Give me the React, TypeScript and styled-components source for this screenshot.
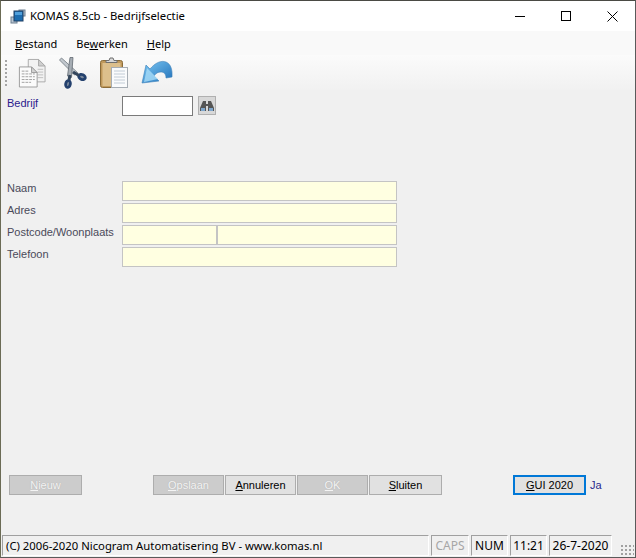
import styled, { createGlobalStyle } from 'styled-components';

const GlobalStyle = createGlobalStyle`
  html, body {
    margin: 0;
    padding: 0;
    background: #f0f0f0;
  }
`;

const Mnemonic = styled.span`
  text-decoration: underline;
  text-underline-offset: 1px;
`;

const AppIcon = () => (
  <svg width="16" height="16" viewBox="0 0 16 16">
    <rect x="9" y="2" width="6" height="6" fill="#b9c6d2" stroke="#6d7f90" />
    <rect x="1" y="9" width="6" height="6" fill="#b9c6d2" stroke="#6d7f90" />
    <rect x="4" y="3" width="9" height="10" fill="#1c6db0" stroke="#1f3f63" />
    <rect x="5" y="4" width="7" height="3" fill="#4fa0dc" />
  </svg>
);

const CopyIcon = () => (
  <svg width="28" height="32" viewBox="0 0 30 32">
    <path d="M11 1.5h11l7 7v17H11z" fill="#f2f2f2" stroke="#a8a8a8" />
    <path d="M22 1.5v7h7z" fill="#cfcfcf" stroke="#a8a8a8" />
    <path d="M21 12h6M21 15h6M21 18h6M21 21h6" stroke="#bcbcbc" />
    <path d="M1.5 9.5h13l6 6v15.5h-19z" fill="#fbfbfb" stroke="#9a9a9a" />
    <path d="M14.5 9.5v6h6z" fill="#d4d4d4" stroke="#9a9a9a" />
    <path d="M4 14h8M4 17h14M4 20h14M4 23h14M4 26h10" stroke="#9d9d9d" strokeDasharray="3 1" />
  </svg>
);

const CutIcon = () => (
  <svg width="28" height="32" viewBox="0 0 28 32">
    <path d="M0.5 3l15 15 3-2.5L2.5 1z" fill="#c2c8ce" stroke="#6f777f" strokeWidth="0.8" />
    <path d="M11 0.5L8.5 19l4 1.5 1.5-20z" fill="#a6adb4" stroke="#626a72" strokeWidth="0.8" />
    <ellipse cx="23" cy="20" rx="3.4" ry="2.4" fill="#7c8a9c" stroke="#24416e" strokeWidth="2.8" transform="rotate(25 23 20)" />
    <path d="M14 15l6 3.5" stroke="#34465c" strokeWidth="3" />
    <ellipse cx="9" cy="27" rx="2.3" ry="3.4" fill="#7c8a9c" stroke="#24416e" strokeWidth="2.8" transform="rotate(12 9 27)" />
    <path d="M11 18l-1 5" stroke="#34465c" strokeWidth="3" />
  </svg>
);

const PasteIcon = () => (
  <svg width="28" height="32" viewBox="0 0 28 32">
    <rect x="0.5" y="3.5" width="22" height="27" rx="2" fill="#c0995c" stroke="#8a6c3a" />
    <rect x="2.5" y="6" width="18" height="23" fill="#dcbf8c" />
    <path d="M6 5.5h11v-2h-3l-1-2.5h-3l-1 2.5H6z" fill="#d8d8d8" stroke="#6f6f6f" />
    <rect x="11.5" y="10.5" width="16" height="20" fill="#fafbfc" stroke="#a6adb4" />
    <path d="M14 14h11M14 17h11M14 20h11M14 23h11M14 26h11" stroke="#c2ccd6" />
  </svg>
);

const UndoIcon = () => (
  <svg width="32" height="30" viewBox="0 0 32 30">
    <defs>
      <linearGradient id="undoFill" x1="0" y1="0" x2="1" y2="1">
        <stop offset="0" stopColor="#7cc8f4" />
        <stop offset="1" stopColor="#1f6fb8" />
      </linearGradient>
    </defs>
    <path
      d="M1 25L5 7l4 4c5-6 11-9 16-7 5 2 6.500 8 6 15l-6 1c0-4-2-6-5-6-3 0-5 1-7 4l5 5z"
      fill="url(#undoFill)"
      stroke="#3a7fb8"
      strokeWidth="0.6"
    />
    <path d="M3 24L6 10l11 11z" fill="#a8dcf8" opacity="0.8" />
  </svg>
);

const BinocularsIcon = () => (
  <svg width="14" height="12" viewBox="0 0 14 12">
    <path d="M3 1h3v3h2V1h3l3 7v3H8V6H6v5H0V8z" fill="#555" />
    <rect x="1" y="8" width="4" height="3" fill="#7ea6cc" />
    <rect x="9" y="8" width="4" height="3" fill="#7ea6cc" />
  </svg>
);

const WindowIcon = () => (
  <svg width="10" height="10" viewBox="0 0 10 10">
    <rect x="0.5" y="0.5" width="9" height="9" fill="none" stroke="#000" />
  </svg>
);

const CloseIcon = () => (
  <svg width="11" height="11" viewBox="0 0 11 11">
    <path d="M0.5 0.5l10 10M10.5 0.5l-10 10" stroke="#000" />
  </svg>
);

const Frame = styled.div`
  box-sizing: border-box;
  width: 636px;
  height: 558px;
  display: flex;
  flex-direction: column;
  background: #f0f0f0;
  border-top: 1px solid #4a4a44;
  border-left: 1px solid #6b6b55;
  border-right: 1px solid #5a5a5a;
  border-bottom: 1px solid #5a5a5a;
  font-family: 'Liberation Sans', Arial, sans-serif;
  font-size: 11px;
  color: #000;
  overflow: hidden;
`;

const TitleBar = styled.div`
  box-sizing: border-box;
  height: 30px;
  flex: none;
  display: flex;
  align-items: center;
  background: #fff;
  padding-left: 9px;
`;

const TitleText = styled.span`
  margin: 0 0 2px 4px;
  font-family: 'Noto Sans', 'Open Sans', sans-serif;
  font-size: 11.3px;
  flex: 1;
`;

const WindowButton = styled.div`
  width: 46px;
  height: 30px;
  display: flex;
  align-items: center;
  justify-content: center;
`;

const MinimizeBar = styled.div`
  width: 10px;
  height: 1px;
  background: #000;
`;

const MenuBar = styled.div`
  height: 24px;
  flex: none;
  display: flex;
  align-items: center;
  background: #f9f9f9;
  padding-left: 14px;
  gap: 19px;
  font-family: 'Noto Sans', 'Open Sans', sans-serif;
`;

const MenuItem = styled.span`
  font-size: 11px;
`;

const ToolBar = styled.div`
  height: 35px;
  flex: none;
  display: flex;
  align-items: center;
  background: linear-gradient(#fbfbfb, #f1f1f1);
  padding-left: 4px;
`;

const Grip = styled.div`
  width: 2px;
  height: 26px;
  margin-right: 11px;
  background: repeating-linear-gradient(#a5a5a5 0 2px, transparent 2px 4px);
`;

const ToolIcons = styled.div`
  display: flex;
  align-items: center;
  gap: 13px;
`;

const Form = styled.div`
  flex: 1;
  display: flex;
  flex-direction: column;
  padding: 6px 0 0 6px;
`;

const SearchRow = styled.div`
  display: flex;
  align-items: flex-start;
  height: 85px;
`;

const Label = styled.span<{ $accent?: boolean }>`
  width: 115px;
  flex: none;
  line-height: 14px;
  color: ${({ $accent }) => ($accent ? '#2a1a8c' : '#4a4a5a')};
`;

const FieldRow = styled.div`
  display: flex;
  align-items: flex-start;
  margin-bottom: 2px;
`;

const Field = styled.div<{ $w: number; $empty?: boolean }>`
  box-sizing: border-box;
  width: ${({ $w }) => $w}px;
  height: 20px;
  background: ${({ $empty }) => ($empty ? '#fff' : '#ffffe1')};
  border: 1px solid ${({ $empty }) => ($empty ? '#7a7a7a' : '#c4c4c4')};
`;

const SearchButton = styled.div`
  box-sizing: border-box;
  width: 18px;
  height: 19px;
  margin-left: 5px;
  display: flex;
  align-items: center;
  justify-content: center;
  background: #d8d8d8;
  border: 1px solid #b0b0b0;
`;

const ButtonBar = styled.div`
  display: flex;
  align-items: center;
  margin-top: 206px;
  padding-left: 2px;
`;

const ActionButton = styled.div<{ $w: number; $off?: boolean; $focus?: boolean }>`
  box-sizing: border-box;
  width: ${({ $w }) => $w}px;
  height: 20px;
  display: flex;
  align-items: center;
  justify-content: center;
  background: ${({ $off }) => ($off ? '#cccccc' : '#e1e1e1')};
  border: ${({ $focus }) => ($focus ? '2px solid #0078d7' : '1px solid #adadad')};
  color: ${({ $off }) => ($off ? '#f4f4f4' : '#000')};
  text-shadow: ${({ $off }) => ($off ? '0 0 1px #a5a5a5' : 'none')};
`;

const ButtonGroup = styled.div`
  display: flex;
  gap: 1px;
  margin-left: 71px;
`;

const GuiGroup = styled.div`
  display: flex;
  align-items: center;
  margin-left: 71px;
`;

const GuiValue = styled.span`
  margin-left: 4px;
  color: #2a2a8c;
`;

const StatusBar = styled.div`
  height: 21px;
  flex: none;
  display: flex;
  gap: 2px;
  padding: 0 0 1px 1px;
  align-items: stretch;
  font-family: 'Noto Sans', 'Open Sans', sans-serif;
  font-size: 12px;
`;

const StatusCell = styled.div<{ $w: number; $dim?: boolean }>`
  box-sizing: border-box;
  width: ${({ $w }) => $w}px;
  display: flex;
  align-items: center;
  justify-content: center;
  border: 1px solid;
  border-color: #a0a0a0 #fff #fff #a0a0a0;
  color: ${({ $dim }) => ($dim ? '#a6a6a6' : '#000')};
`;

const StatusMain = styled(StatusCell)`
  justify-content: flex-start;
  padding-left: 3px;
  font-size: 11.3px;
`;

const SizeGrip = styled.div`
  width: 14px;
  align-self: flex-end;
  height: 12px;
  margin-left: 6px;
  background-image: radial-gradient(#a0a0a0 1px, transparent 1px);
  background-size: 4px 4px;
`;

export default function App() {
  return (
    <>
      <GlobalStyle />
      <Frame>
        <TitleBar>
          <AppIcon />
          <TitleText>KOMAS 8.5cb - Bedrijfselectie</TitleText>
          <WindowButton>
            <MinimizeBar />
          </WindowButton>
          <WindowButton>
            <WindowIcon />
          </WindowButton>
          <WindowButton>
            <CloseIcon />
          </WindowButton>
        </TitleBar>
        <MenuBar>
          <MenuItem>
            <Mnemonic>B</Mnemonic>estand
          </MenuItem>
          <MenuItem>
            Be<Mnemonic>w</Mnemonic>erken
          </MenuItem>
          <MenuItem>
            <Mnemonic>H</Mnemonic>elp
          </MenuItem>
        </MenuBar>
        <ToolBar>
          <Grip />
          <ToolIcons>
            <CopyIcon />
            <CutIcon />
            <PasteIcon />
            <UndoIcon />
          </ToolIcons>
        </ToolBar>
        <Form>
          <SearchRow>
            <Label $accent>Bedrijf</Label>
            <Field $w={71} $empty />
            <SearchButton>
              <BinocularsIcon />
            </SearchButton>
          </SearchRow>
          <FieldRow>
            <Label>Naam</Label>
            <Field $w={275} />
          </FieldRow>
          <FieldRow>
            <Label>Adres</Label>
            <Field $w={275} />
          </FieldRow>
          <FieldRow>
            <Label>Postcode/Woonplaats</Label>
            <Field $w={95} />
            <Field $w={180} />
          </FieldRow>
          <FieldRow>
            <Label>Telefoon</Label>
            <Field $w={275} />
          </FieldRow>
          <ButtonBar>
            <ActionButton $w={73} $off>
              <span>
                <Mnemonic>N</Mnemonic>ieuw
              </span>
            </ActionButton>
            <ButtonGroup>
              <ActionButton $w={71} $off>
                <span>
                  <Mnemonic>O</Mnemonic>pslaan
                </span>
              </ActionButton>
              <ActionButton $w={71}>
                <span>
                  <Mnemonic>A</Mnemonic>nnuleren
                </span>
              </ActionButton>
              <ActionButton $w={71} $off>
                <span>
                  <Mnemonic>O</Mnemonic>K
                </span>
              </ActionButton>
              <ActionButton $w={73}>
                <span>
                  <Mnemonic>S</Mnemonic>luiten
                </span>
              </ActionButton>
            </ButtonGroup>
            <GuiGroup>
              <ActionButton $w={73} $focus>
                <span>
                  <Mnemonic>G</Mnemonic>UI 2020
                </span>
              </ActionButton>
              <GuiValue>Ja</GuiValue>
            </GuiGroup>
          </ButtonBar>
        </Form>
        <StatusBar>
          <StatusMain $w={427}>(C) 2006-2020 Nicogram Automatisering BV - www.komas.nl</StatusMain>
          <StatusCell $w={38} $dim>
            CAPS
          </StatusCell>
          <StatusCell $w={37}>NUM</StatusCell>
          <StatusCell $w={37}>11:21</StatusCell>
          <StatusCell $w={63}>26-7-2020</StatusCell>
          <SizeGrip />
        </StatusBar>
      </Frame>
    </>
  );
}
